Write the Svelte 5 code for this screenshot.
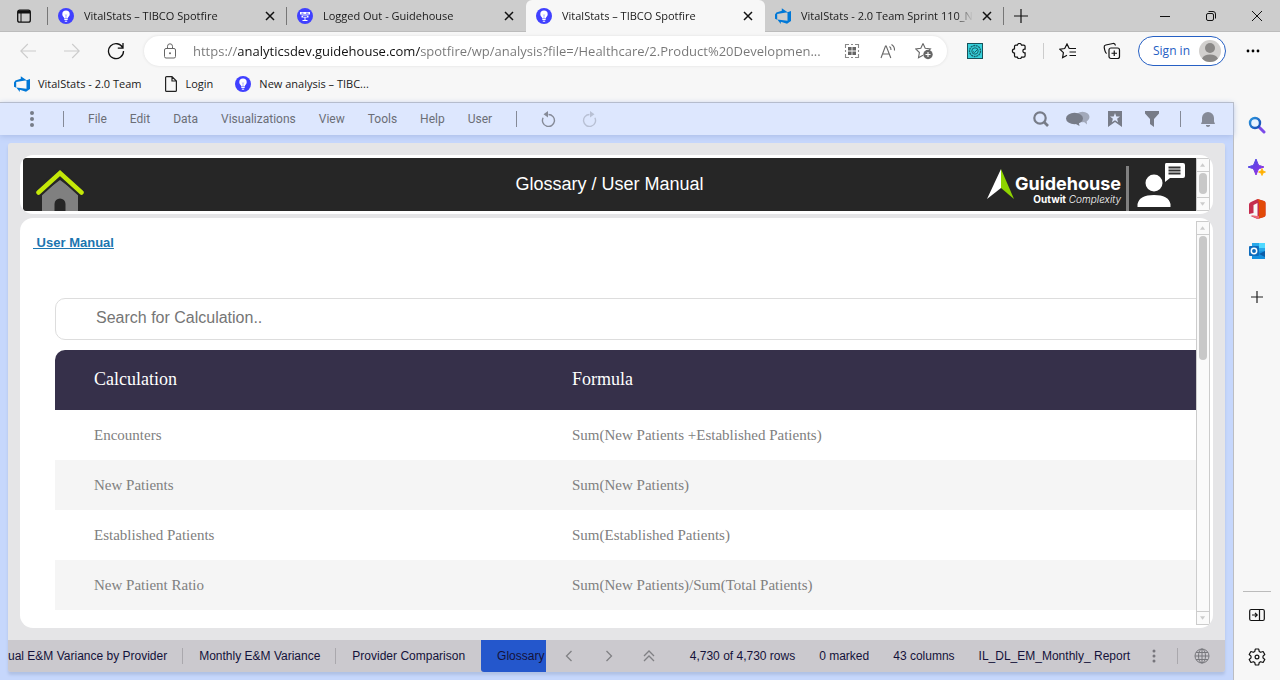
<script>
  const tabs = [
    { title: 'VitalStats – TIBCO Spotfire', icon: 'bulb' },
    { title: 'Logged Out - Guidehouse', icon: 'board' },
    { title: 'VitalStats – TIBCO Spotfire', icon: 'bulb', active: true },
    { title: 'VitalStats - 2.0 Team Sprint 110_N', icon: 'devops' }
  ];
  const bookmarks = [
    { title: 'VitalStats - 2.0 Team', icon: 'devops' },
    { title: 'Login', icon: 'page' },
    { title: 'New analysis – TIBC...', icon: 'bulb' }
  ];
  const menus = ['File', 'Edit', 'Data', 'Visualizations', 'View', 'Tools', 'Help', 'User'];
  const rows = [
    ['Encounters', 'Sum(New Patients +Established Patients)'],
    ['New Patients', 'Sum(New Patients)'],
    ['Established Patients', 'Sum(Established Patients)'],
    ['New Patient Ratio', 'Sum(New Patients)/Sum(Total Patients)']
  ];
  const pages = ['ual E&M Variance by Provider', 'Monthly E&M Variance', 'Provider Comparison'];
  let url = $state('https://analyticsdev.guidehouse.com/spotfire/wp/analysis?file=/Healthcare/2.Product%20Developmen...');
  let query = $state('');
</script>

{#snippet siteIcon(kind)}
  {#if kind === 'bulb'}
    <svg width="16" height="16" viewBox="0 0 16 16"><circle cx="8" cy="8" r="8" fill="#4040ff" /><path d="M8 2.500a3.700 3.700 0 0 0-3.700 3.700c0 1.500.9 2.200 1.500 3.100.3.500.3.900.3 1.200h3.800c0-.3 0-.7.3-1.200.6-.9 1.500-1.600 1.500-3.100A3.700 3.700 0 0 0 8 2.500z" fill="#fff" /><path d="M6.300 11.500h3.400M6.800 13.200h2.400" stroke="#fff" /><path d="M8 10.500V7.500M6.800 6.500L8 7.500l1.200-1" stroke="#9a9aff" stroke-width=".7" fill="none" /></svg>
  {:else if kind === 'board'}
    <svg width="16" height="16" viewBox="0 0 16 16"><circle cx="8" cy="8" r="8" fill="#4040ff" /><path d="M3 4h10v2.500H3zM4.500 7.500h7v2h-7z" fill="#fff" /><path d="M8 9v4M5.500 12.500h5" stroke="#fff" /><path d="M4.500 5.200h2M9 5.200h2.500M6 8.500h4" stroke="#4040ff" stroke-width=".8" /></svg>
  {:else if kind === 'devops'}
    <svg width="16" height="16" viewBox="0 0 16 16"><path d="M16 3v10l-4 2.800-6.200-2.100v2.200l-3.500-4.300L12.500 12.800V4.200zM12.600 4.200L6.800.3v2.500L1.400 4.500 0 6.500v4.300l2.200 1V5.900z" fill="#0078d7" /></svg>
  {:else}
    <svg width="14" height="16" viewBox="0 0 14 16"><path d="M1.600 1.600c0-.6.400-1 1-1H8l4.400 4.400v9.400c0 .6-.4 1-1 1H2.600c-.6 0-1-.4-1-1zM8 .6V5h4.400" fill="none" stroke="#222" stroke-width="1.200" /></svg>
  {/if}
{/snippet}

{#snippet scrollbar(cls)}
  <div class="scrollbar {cls}">
    <svg width="14" height="14" viewBox="0 0 14 14"><path d="M3.500 9h6L6.500 5z" fill="#ccc" /></svg>
    <div class="track"><div class="thumb"></div></div>
    <svg width="14" height="14" viewBox="0 0 14 14"><path d="M3.500 5h6L6.500 9z" fill="#ccc" /></svg>
  </div>
{/snippet}

<div class="browser">
  <header class="tabstrip">
    <button class="tabmenu" aria-label="Tab actions"><svg width="16" height="16" viewBox="0 0 16 16"><rect x="1.700" y="2.200" width="12.600" height="12" rx="2" fill="none" stroke="#111" stroke-width="1.300" /><path d="M2 2.500h12v3H2z" fill="#111" /><path d="M5 5v9" stroke="#111" /></svg></button>
    {#each tabs as tab}
      <div class="tab" class:active={tab.active}>
        {@render siteIcon(tab.icon)}
        <span class="tabtitle">{tab.title}</span>
        <button class="close" aria-label="Close tab"><svg width="10" height="10" viewBox="0 0 10 10"><path d="M1 1l8 8M9 1l-8 8" stroke="#111" stroke-width="1.500" /></svg></button>
      </div>
    {/each}
    <button class="newtab" aria-label="New tab"><svg width="14" height="14" viewBox="0 0 14 14"><path d="M7 0v14M0 7h14" stroke="#111" stroke-width="1.200" /></svg></button>
    <div class="window">
      <button aria-label="Minimize"><svg width="10" height="10" viewBox="0 0 10 10"><path d="M0 5.500h10" stroke="#111" /></svg></button>
      <button aria-label="Restore"><svg width="10" height="10" viewBox="0 0 10 10"><rect x=".5" y="2.500" width="7" height="7" rx="1.500" fill="none" stroke="#111" /><path d="M2.500.5H7A2.500 2.500 0 0 1 9.500 3v4.500" fill="none" stroke="#111" /></svg></button>
      <button aria-label="Close"><svg width="10" height="10" viewBox="0 0 10 10"><path d="M0 0l10 10M10 0L0 10" stroke="#111" /></svg></button>
    </div>
  </header>

  <div class="toolbar">
    <div class="history">
      <button aria-label="Back"><svg width="16" height="16" viewBox="0 0 16 16"><path d="M16 8H.8M7.800 1L.8 8l7 7" fill="none" stroke="#ccc" stroke-width="1.100" /></svg></button>
      <button aria-label="Forward"><svg width="16" height="16" viewBox="0 0 16 16"><path d="M0 8h15.200M8.200 1l7 7-7 7" fill="none" stroke="#ccc" stroke-width="1.100" /></svg></button>
      <button aria-label="Refresh"><svg width="18" height="18" viewBox="0 0 18 18"><path d="M15.800 6A7.500 7.500 0 1 0 16.500 9M16 1v5.200h-5.200" fill="none" stroke="#111" stroke-width="1.300" /></svg></button>
    </div>
    <div class="address">
      <svg width="14" height="16" viewBox="0 0 14 16"><rect x="1.500" y="5.500" width="11" height="9.500" rx="1.500" fill="none" stroke="#666" /><path d="M4.500 5.500V3.300a2.500 2.500 0 0 1 5 0v2.200" fill="none" stroke="#666" /><circle cx="7" cy="10.200" r="1" fill="#666" /></svg>
      <input class="url" aria-label="Address" bind:value={url} />
      <button aria-label="QR code"><svg width="16" height="16" viewBox="0 0 16 16"><path d="M1.500 5V1.500H5M7 1.500h2M11 1.500h3.500V5M14.500 7v2M14.500 11v3.500H11M9 14.500H7M5 14.500H1.500V11M1.500 9V7" fill="none" stroke="#888" stroke-width="1.100" /><path d="M4 4h3.600v3.600H4zM8.400 4H12v3.600H8.400zM4 8.400h3.600V12H4zM8.400 8.400H12V12H8.400z" fill="#666" /></svg></button>
      <button aria-label="Read aloud"><svg width="16" height="16" viewBox="0 0 16 16"><path d="M1 15L5.500 3h.7l4.600 12M2.700 11h6.400M9.500 3.500q1.700 1.300 1.500 3.500M11.500 1.500Q14.800 3.500 14.500 7.500" fill="none" stroke="#666" stroke-width="1.100" /></svg></button>
      <button aria-label="Add to favorites"><svg width="18" height="18" viewBox="0 0 18 18"><path d="M8 1.500l2.200 4.700 5.200.6-3.800 3.700M8 1.500L5.800 6.200.7 6.900l3.700 3.600-.9 5.200L8 13.200" fill="none" stroke="#666" stroke-width="1.100" /><circle cx="13" cy="12.500" r="4.700" fill="#666" /><path d="M13 10v5M10.500 12.500h5" stroke="#fff" stroke-width="1.100" /></svg></button>
    </div>
    <div class="actions">
      <button aria-label="Extension"><svg width="16" height="16" viewBox="0 0 16 16"><rect x=".5" y=".5" width="15" height="15" fill="#36d0da" stroke="#17525a" /><circle cx="8" cy="8" r="5.500" fill="none" stroke="#17606a" stroke-width="1.300" stroke-dasharray="2 .6" /><circle cx="8" cy="8" r="3.200" fill="none" stroke="#17606a" /><path d="M6 8.500l1.500 1L11 6" fill="none" stroke="#17606a" /></svg></button>
      <button aria-label="Extensions"><svg width="16" height="16" viewBox="0 0 16 16"><path d="M3.500 3.500c0-.8.700-1.400 1.400-1.400h1.500a2.100 2.100 0 0 1 4.100 0h2.200c.9 0 1.400.6 1.400 1.400v2.600h-.8a1.900 1.900 0 0 0 0 3.700h.8v3c0 .8-.5 1.400-1.400 1.400h-2.200a2.100 2.100 0 0 1-4.100 0H4.900c-.7 0-1.400-.6-1.400-1.400v-2.700a2.100 2.100 0 0 1 0-4.200z" fill="none" stroke="#111" stroke-width="1.200" /></svg></button>
      <span class="rule"></span>
      <button aria-label="Favorites"><svg width="18" height="16" viewBox="0 0 18 16"><path d="M10.200 5.500L8 1 5.700 5.500.9 6.200l3.500 3.500-.8 5L8 12.300M10.200 5.500H17M10.500 9H17M10.500 12.500H17" fill="none" stroke="#111" stroke-width="1.200" /></svg></button>
      <button aria-label="Collections"><svg width="18" height="18" viewBox="0 0 18 18"><rect x="6" y="6" width="10.500" height="10.500" rx="2" fill="none" stroke="#111" stroke-width="1.200" /><path d="M11.250 8.500v5.500M8.500 11.250h5.500M3.700 11.500C2.300 10.800 1.500 7.200 1.200 5.300c-.2-1.100.5-2 1.600-2.300L10 1.500c1.300-.2 2.200.5 2.500 2" fill="none" stroke="#111" stroke-width="1.200" /></svg></button>
    </div>
    <button class="signin">Sign in <svg width="24" height="24" viewBox="0 0 24 24"><circle cx="12" cy="12" r="11" fill="#d2d0ce" /><circle cx="12" cy="9" r="5" fill="#8a8886" /><path d="M4 19.500Q6 15.500 12 15.500t8 4Q17 23 12 23t-8-3.500z" fill="#8a8886" /></svg></button>
    <button class="more" aria-label="Settings and more"><svg width="14" height="4" viewBox="0 0 14 4"><circle cx="2" cy="2" r="1.400" /><circle cx="7" cy="2" r="1.400" /><circle cx="12" cy="2" r="1.400" /></svg></button>
  </div>

  <nav class="bookmarks" aria-label="Bookmarks">
    {#each bookmarks as mark}
      <a href="#bookmark">{@render siteIcon(mark.icon)}<span>{mark.title}</span></a>
    {/each}
  </nav>

  <div class="body">
    <main class="app">
      <nav class="menubar" aria-label="Application menu">
        <button class="kebab" aria-label="Menu"><svg width="4" height="16" viewBox="0 0 4 16"><circle cx="2" cy="2" r="2" /><circle cx="2" cy="8" r="2" /><circle cx="2" cy="14" r="2" /></svg></button>
        <span class="bar"></span>
        <div class="menus">
          {#each menus as menu}<button>{menu}</button>{/each}
        </div>
        <span class="bar"></span>
        <div class="undo">
          <button aria-label="Undo"><svg width="16" height="16" viewBox="0 0 16 16"><path d="M7.500 3.500a6 6 0 1 1-5.400 3.300" fill="none" stroke="#858a97" stroke-width="1.400" /><path d="M2.500 3.300L7 0v6.500z" fill="#858a97" /></svg></button>
          <button aria-label="Redo"><svg width="16" height="16" viewBox="0 0 16 16"><path d="M8.500 3.500a6 6 0 1 0 5.400 3.300" fill="none" stroke="#b8c0d4" stroke-width="1.400" /><path d="M13.500 3.300L9 0v6.500z" fill="#b8c0d4" /></svg></button>
        </div>
        <div class="tools">
          <button aria-label="Search"><svg width="16" height="16" viewBox="0 0 16 16"><circle cx="7" cy="7" r="5.700" fill="none" stroke="#777c88" stroke-width="2.200" /><path d="M11 11l4 4" stroke="#777c88" stroke-width="2.700" /></svg></button>
          <button aria-label="Comments"><svg width="24" height="16" viewBox="0 0 24 16"><ellipse cx="16.500" cy="6" rx="7" ry="5.200" fill="#a2a9ba" /><path d="M17 10l4 3.500-.5-5z" fill="#a2a9ba" /><ellipse cx="8.500" cy="7.500" rx="8.500" ry="5.800" fill="#777c88" /><path d="M8 12l5.500 3-1-5z" fill="#777c88" /></svg></button>
          <button aria-label="Bookmarks"><svg width="14" height="16" viewBox="0 0 14 16"><path d="M0 0h14v16l-7-5-7 5z" fill="#777c88" /><path d="M7 2l1.300 3.400 3.700.2-2.900 2.200 1 3.500L7 9.300l-3.100 2 1-3.500L2 5.600l3.700-.2z" fill="#dde7fe" /></svg></button>
          <button aria-label="Filters"><svg width="16" height="16" viewBox="0 0 16 16"><path d="M1 0h14v2.500L10 8v8l-4-3V8L1 2.500z" fill="#777c88" /></svg></button>
          <span class="bar"></span>
          <button aria-label="Notifications"><svg width="14" height="16" viewBox="0 0 14 16"><path d="M1 7a6 6 0 0 1 12 0v3.500l1 2.500H0l1-2.500zM5 14h4v1q-2 2-4 0z" fill="#858a97" /></svg></button>
        </div>
      </nav>

      <div class="workspace">
        <div class="canvas">
          <section class="panel heading">
            <div class="banner">
              <a class="home" href="#home" aria-label="Home"><svg width="48" height="42" viewBox="0 0 48 42"><path d="M6 24L24 11l18 13v18H6z" fill="#808080" /><path d="M18.500 42V35a5.500 5.500 0 0 1 11 0v7z" fill="#262626" /><path d="M2.500 23.500L24 4l21.500 19.500" fill="none" stroke="#262626" stroke-width="9" /><path d="M2.500 23.500L24 4l21.500 19.500" fill="none" stroke="#c4e808" stroke-width="4.500" stroke-linecap="round" /></svg></a>
              <h1>Glossary / User Manual</h1>
              <div class="brand">
                <svg class="arrow" width="28" height="30" viewBox="0 0 28 30"><path d="M14 0v19L0 30z" fill="#fff" /><path d="M14 0v19l13 11z" fill="#8fd400" /></svg>
                <div class="words"><strong>Guidehouse</strong><span><b>Outwit</b> <i>Complexity</i></span></div>
                <span class="divider"></span>
                <svg width="50" height="48" viewBox="0 0 50 48"><circle cx="18" cy="22" r="8.500" fill="#fff" /><path d="M1.500 46V43q2-9 16.500-9t16.500 9v3z" fill="#fff" /><path d="M30 2h17q2 0 2 2v11q0 2-2 2H34l-5 4V4q0-2 1-2z" fill="#fff" /><path d="M32.500 6.500h12M32.500 9.500h12M32.500 12.500h12" stroke="#333" stroke-width="1.800" /></svg>
              </div>
            </div>
            {@render scrollbar('short')}
          </section>

          <section class="panel content">
            <div class="document">
              <a class="manual" href="#manual">&nbsp;User Manual</a>
              <input class="search" type="text" aria-label="Search for Calculation" placeholder="Search for Calculation.." bind:value={query} />
              <table>
                <thead><tr><th>Calculation</th><th>Formula</th></tr></thead>
                <tbody>
                  {#each rows as row}<tr><td>{row[0]}</td><td>{row[1]}</td></tr>{/each}
                </tbody>
              </table>
            </div>
            {@render scrollbar('long')}
          </section>
        </div>

        <footer class="status">
          <div class="pages">
            {#each pages as page}<button>{page}</button>{/each}
            <button class="current">Glossary</button>
          </div>
          <div class="paging">
            <button aria-label="Previous page"><svg width="14" height="14" viewBox="0 0 14 14"><path d="M9.500 2l-5 5 5 5" /></svg></button>
            <button aria-label="Next page"><svg width="14" height="14" viewBox="0 0 14 14"><path d="M4.500 2l5 5-5 5" /></svg></button>
            <button aria-label="Show all pages"><svg width="14" height="14" viewBox="0 0 14 14"><path d="M2 7l5-5 5 5M2 12l5-5 5 5" /></svg></button>
          </div>
          <div class="counts">
            <span>4,730 of 4,730 rows</span><span>0 marked</span><span>43 columns</span><span>IL_DL_EM_Monthly_ Report</span>
          </div>
          <button class="dots" aria-label="Table options"><svg width="4" height="14" viewBox="0 0 4 14"><circle cx="2" cy="2" r="1.500" /><circle cx="2" cy="7" r="1.500" /><circle cx="2" cy="12" r="1.500" /></svg></button>
          <span class="split"></span>
          <button class="globe" aria-label="Language"><svg width="16" height="16" viewBox="0 0 16 16"><g fill="none" stroke="#77777c"><circle cx="8" cy="8" r="7" /><ellipse cx="8" cy="8" rx="3.500" ry="7" /><path d="M8 1v14M1 8h14M2 4.500h12M2 11.500h12" /></g></svg></button>
        </footer>
      </div>
    </main>

    <aside class="sidebar">
      <button aria-label="Search"><svg width="18" height="18" viewBox="0 0 18 18"><defs><linearGradient id="lens" x1="0" y1="0" x2="1" y2="1"><stop offset="0" stop-color="#2b95dc" /><stop offset="1" stop-color="#1748b5" /></linearGradient></defs><path d="M11 11l5 5" stroke="#7b4be8" stroke-width="3" stroke-linecap="round" /><circle cx="7" cy="7" r="5" fill="#e8f3ff" stroke="url(#lens)" stroke-width="2.400" /></svg></button>
      <button aria-label="Discover"><svg width="18" height="18" viewBox="0 0 18 18"><defs><linearGradient id="spark" x1="0" y1="0" x2="1" y2="1"><stop offset="0" stop-color="#3b51e8" /><stop offset="1" stop-color="#a32ee0" /></linearGradient></defs><path d="M8 1l2 5q.4 1.200 1.500 1.500L16 9l-4.500 1.500Q10.400 11 10 12l-2 5-2-5q-.4-1-1.500-1.500L0 9l4.500-1.500Q5.600 7.200 6 6z" fill="url(#spark)" stroke="url(#spark)" stroke-linejoin="round" /><path d="M14 10.500l1 2.500 2.500 1-2.500 1-1 2.500-1-2.500-2.500-1 2.500-1z" fill="#ffb000" stroke="#ffb000" stroke-width=".8" /></svg></button>
      <button aria-label="Office"><svg width="18" height="20" viewBox="0 0 18 20"><path d="M9.500 0L16 2q1.500.5 1.500 2v12q0 1.500-1.500 2l-6.500 2-7-3 7 .5V4L5.500 6v8L1 15V5.500Q1 4 2.500 3.200z" fill="#c52c4e" /><path d="M9.500 0L16 2q1.500.5 1.500 2v12q0 1.500-1.500 2l-5 1.500V4z" fill="#e24a08" /><path d="M2.500 16l7 1H11v2.500l-1.500.5z" fill="#ef6a78" /></svg></button>
      <button aria-label="Outlook"><svg width="18" height="18" viewBox="0 0 18 18"><path d="M4 1h13v16H4z" fill="#28a8ea" /><path d="M11 1h6v5h-6z" fill="#50d9ff" /><path d="M4 10l13-1v8H4z" fill="#1490df" /><path d="M11 12l6-3v6z" fill="#0a5ea8" /><rect x="1" y="4" width="10" height="10" rx="1" fill="#0f6cbd" /><circle cx="6" cy="9" r="2.700" fill="none" stroke="#fff" stroke-width="1.500" /></svg></button>
      <button class="add" aria-label="Add"><svg width="12" height="12" viewBox="0 0 12 12"><path d="M6 0v12M0 6h12" stroke="#222" stroke-width="1.200" /></svg></button>
      <div class="low">
        <button aria-label="Hide sidebar"><svg width="16" height="14" viewBox="0 0 16 14"><rect x=".7" y="1.500" width="14.600" height="11" rx="1.500" fill="none" stroke="#111" stroke-width="1.200" /><path d="M10.500 1.500v11M3 7h5M6 4.800L8.200 7 6 9.200" fill="none" stroke="#111" stroke-width="1.200" /></svg></button>
        <button aria-label="Sidebar settings"><svg width="18" height="18" viewBox="0 0 18 18"><path d="M7.300 1h3.400l.5 2.400 1.500.9L15.100 3.500l1.700 3L15 8.100v1.800l1.800 1.600-1.700 3-2.400-.8-1.500.9-.5 2.400H7.300l-.5-2.400-1.500-.9-2.400.8-1.700-3L3 9.900V8.100L1.200 6.500l1.700-3 2.400.8 1.500-.9z" fill="none" stroke="#111" stroke-width="1.200" stroke-linejoin="round" /><circle cx="9" cy="9" r="1.900" fill="none" stroke="#111" stroke-width="1.200" /></svg></button>
      </div>
    </aside>
  </div>
</div>

<style>
  :global(body) { margin: 0; }
  * { box-sizing: border-box; }
  button { border: 0; padding: 0; margin: 0; background: none; font: inherit; color: inherit; display: flex; align-items: center; justify-content: center; white-space: nowrap; }
  a { color: inherit; text-decoration: none; }
  svg { display: block; flex: none; }
  .browser { height: 100vh; display: flex; flex-direction: column; background: #f7f7f7; font: 11px/16px "Open Sans", sans-serif; color: #1a1a1a; overflow: hidden; }

  .tabstrip { display: flex; height: 32px; flex: none; background: #cdcdcd; box-shadow: inset 0 -1px #bcbcbc; }
  .tabmenu { width: 48px; flex: none; }
  .tab { display: flex; align-items: center; flex: 0 1 239px; min-width: 0; padding: 0 12px 0 10px; position: relative; }
  .tab::before { content: ""; position: absolute; left: -1px; top: 7px; height: 18px; width: 1px; background: #777; }
  .tab:nth-child(5)::after { content: ""; position: absolute; right: 0; top: 7px; height: 18px; width: 1px; background: #777; }
  .tab.active { background: #f7f7f7; border-radius: 6px 6px 0 0; }
  .tab.active::before, .tab.active + .tab::before { display: none; }
  .tabtitle { flex: 1; min-width: 0; margin: 0 9px 0 10px; white-space: nowrap; overflow: hidden; mask-image: linear-gradient(to right, #000 calc(100% - 16px), transparent); }
  .close { width: 10px; height: 16px; }
  .newtab { width: 34px; }
  .window { display: flex; margin-left: auto; }
  .window button { width: 46px; }

  .toolbar { display: flex; align-items: center; height: 38px; flex: none; }
  .history { display: flex; padding-left: 6px; width: 144px; flex: none; }
  .history button { width: 44px; height: 30px; }
  .address { flex: 1; min-width: 0; height: 30px; border-radius: 15px; background: #fff; box-shadow: 0 0 3px #ddd; display: flex; align-items: center; padding: 0 5px 0 19px; }
  .address button { width: 36px; height: 30px; }
  .url { flex: 1; min-width: 0; margin-left: 16px; border: 0; outline: 0; padding: 0; height: 30px; font: 13px/20px "Open Sans", sans-serif; color: transparent; caret-color: #111; background: linear-gradient(to right, #767676 45px, #111 45px, #111 228px, #767676 228px); background-clip: text; }
  .actions { display: flex; align-items: center; margin-left: 6px; }
  .actions button { width: 44px; height: 30px; }
  .rule { width: 1px; height: 16px; background: #ccc; margin: 0 2px; }
  .signin { width: 88px; height: 30px; border: 1px solid #2660c4; border-radius: 15px; background: #fff; color: #2660c4; font-size: 12px; justify-content: space-between; padding: 0 3px 0 14px; margin-left: 4px; }
  .more { width: 54px; height: 30px; }

  .bookmarks { display: flex; align-items: center; gap: 22px; height: 32px; flex: none; padding: 0 14px 4px; }
  .bookmarks a { display: flex; align-items: center; gap: 8px; white-space: nowrap; }

  .body { flex: 1; min-height: 0; display: flex; }
  .app { flex: 1; min-width: 0; display: flex; flex-direction: column; border: solid #bbbdc2; border-width: 1px 1px 0 0; background: #c6d7fc; font: 12px/16px Roboto, sans-serif; }
  .menubar { height: 32px; flex: none; display: flex; align-items: center; background: #dde7fe; color: #6b6e76; box-shadow: 0 1px 6px #a9bbe5; }
  .kebab { width: 63px; fill: #777c88; }
  .bar { width: 1px; height: 16px; background: #858a97; flex: none; }
  .menus { display: flex; gap: 23px; padding: 0 24px; }
  .undo { display: flex; padding-left: 12px; }
  .undo button { width: 40px; height: 24px; }
  .tools { display: flex; align-items: center; margin-left: auto; padding-right: 7px; }
  .tools button { width: 37px; height: 24px; }
  .tools .bar { margin: 0 8px 0 10px; }

  .workspace { flex: 1; min-height: 0; margin: 8px; display: flex; flex-direction: column; border-radius: 3px; overflow: hidden; box-shadow: 0 3px 3px #b0c1e5; z-index: 1; }
  .canvas { flex: 1; min-height: 0; background: #e5e5e7; padding: 12px; display: flex; flex-direction: column; gap: 4px; }
  .panel { background: #fff; border-radius: 13px; padding: 3px; display: flex; overflow: hidden; }
  .heading { height: 59px; flex: none; }
  .content { flex: 1; min-height: 0; }
  .banner { flex: 1; min-width: 0; display: grid; grid-template-columns: 1fr auto 1fr; align-items: center; background: #262626; border-radius: 3px 0 0 3px; overflow: hidden; color: #fff; }
  .home { align-self: end; padding-left: 13px; }
  h1 { margin: 0; padding-bottom: 2px; font: 18px/24px "Liberation Sans", sans-serif; }
  .brand { display: flex; align-items: center; justify-content: flex-end; padding-right: 10px; }
  .arrow { margin-bottom: 2px; }
  .words { display: flex; flex-direction: column; align-items: flex-end; margin-top: 10px; font-family: Inter, sans-serif; }
  .words strong { font-size: 18px; line-height: 18px; font-weight: 700; }
  .words span { font-size: 10px; line-height: 12px; white-space: nowrap; }
  .words i { font-weight: 300; }
  .divider { width: 3px; height: 45px; margin: 8px 7px 0 5px; background: #808080; }

  .scrollbar { width: 14px; flex: none; border: 1px solid #ccc; display: flex; flex-direction: column; background: #fafafa; }
  .scrollbar svg { width: 12px; height: 12px; }
  .track { flex: 1; display: flex; justify-content: center; border: solid #ccc; border-width: 1px 0; padding: 1px 0; }
  .thumb { width: 8px; border-radius: 4px; background: #c8c8c8; }
  .short .thumb { height: 21px; }
  .long .thumb { height: 124px; }

  .document { flex: 1; min-width: 0; overflow: hidden; padding: 13px 0 0 10px; display: flex; flex-direction: column; align-items: flex-start; }
  .manual { font: bold 13px/18px "Liberation Sans", sans-serif; color: #1b75b0; text-decoration: underline; }
  .search { flex: none; width: 100%; height: 42px; margin: 46px 0 10px 22px; padding: 0 0 2px 40px; border: 1px solid #ddd; border-radius: 10px; outline: 0; font: 16px/20px "Liberation Sans", sans-serif; }
  .search::placeholder { color: #757575; }
  table { width: calc(100% - 22px); margin-left: 22px; border-collapse: collapse; table-layout: fixed; font: 15px/20px "Liberation Serif", serif; color: #808080; border-radius: 10px 0 0 0; overflow: hidden; flex: none; }
  th, td { text-align: left; padding: 0 0 0 39px; height: 50px; }
  th:first-child { width: 478px; }
  th { height: 60px; padding-bottom: 2px; background: #36304a; color: #fff; font-size: 18px; font-weight: 400; }
  tbody tr:nth-child(even) { background: #f5f5f5; }

  .status { height: 32px; flex: none; display: flex; align-items: center; background: #cbc9ce; color: #14123a; font-family: "Liberation Sans", sans-serif; }
  .pages { flex: 1; min-width: 0; height: 32px; display: flex; overflow: hidden; }
  .pages button { flex: none; padding: 0 16px; position: relative; }
  .pages button:first-child { padding-left: 0; }
  .pages button:not(:nth-child(n + 3))::after { content: ""; position: absolute; right: 0; top: 8px; width: 1px; height: 16px; background: #aaa8ad; }
  .pages .current { background: #2457cc; border-radius: 0 0 3px 3px; }
  .paging { display: flex; padding-left: 3px; }
  .paging button { width: 40px; height: 32px; }
  .paging path { fill: none; stroke: #808084; stroke-width: 1.300; }
  .counts { display: flex; gap: 24px; padding-left: 21px; white-space: nowrap; }
  .dots { width: 47px; height: 32px; fill: #77757c; }
  .split { width: 1px; height: 16px; background: #aaa8ad; }
  .globe { width: 47px; height: 32px; }

  .sidebar { width: 46px; flex: none; display: flex; flex-direction: column; align-items: center; padding-top: 2px; }
  .sidebar button { width: 46px; height: 42px; flex: none; }
  .sidebar .add { height: 50px; }
  .low { margin-top: auto; border-top: 1px solid #bbb; width: 28px; display: flex; flex-direction: column; align-items: center; padding: 2px 0; }
</style>
